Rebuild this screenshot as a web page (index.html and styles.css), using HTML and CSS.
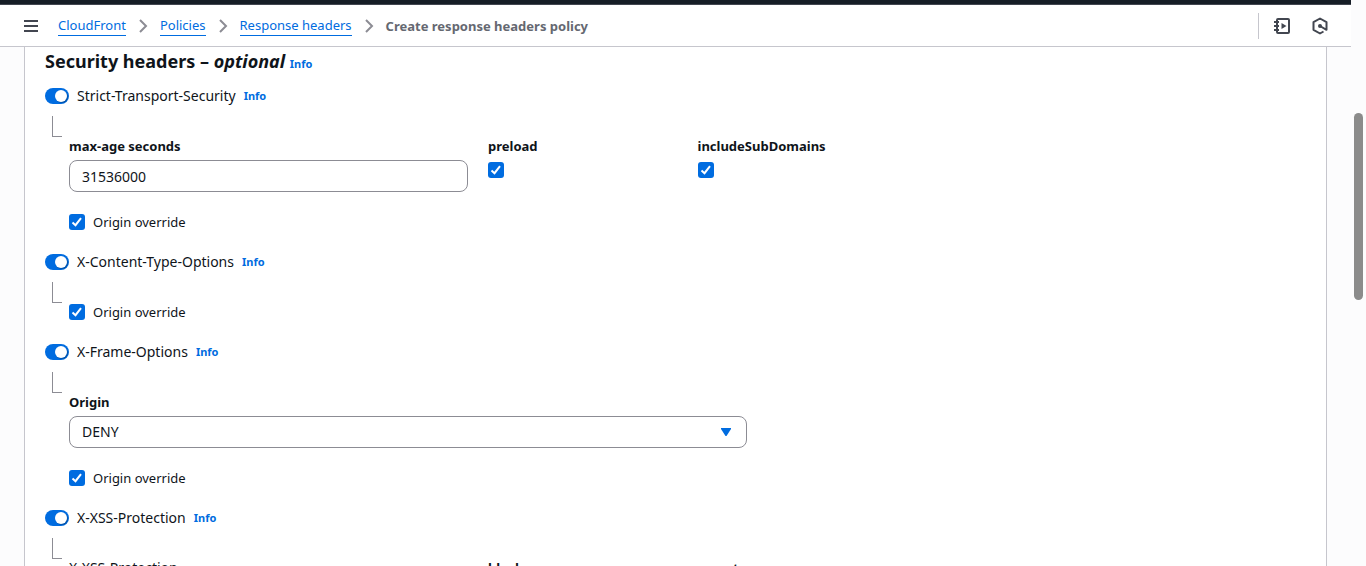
FILE: index.html
```html
<!DOCTYPE html>
<html lang="en">
<head>
<meta charset="utf-8">
<meta name="viewport" content="width=device-width, initial-scale=1">
<title>Create response headers policy</title>
<link rel="stylesheet" href="styles.css">
</head>
<body>
<div class="app">
  <div class="page">
    <div class="console-bar"></div>
    <header class="toolbar">
      <button class="icon-button" type="button" aria-label="Open navigation">
        <svg width="16" height="16" viewBox="0 0 16 16" fill="none" stroke="currentColor" stroke-width="2"><path d="M1 3h14M1 8h14M1 13h14"/></svg>
      </button>
      <nav class="breadcrumbs" aria-label="Breadcrumbs">
        <a class="crumb" href="#">CloudFront</a>
        <svg class="chevron" width="16" height="16" viewBox="0 0 16 16"><path d="M5 2l6 6-6 6"/></svg>
        <a class="crumb" href="#">Policies</a>
        <svg class="chevron" width="16" height="16" viewBox="0 0 16 16"><path d="M5 2l6 6-6 6"/></svg>
        <a class="crumb" href="#">Response headers</a>
        <svg class="chevron" width="16" height="16" viewBox="0 0 16 16"><path d="M5 2l6 6-6 6"/></svg>
        <span class="crumb-current">Create response headers policy</span>
      </nav>
      <div class="tools">
        <button class="icon-button" type="button" aria-label="Tutorials">
          <svg width="18" height="18" viewBox="0 0 18 18" fill="none" stroke="currentColor" stroke-width="2"><rect x="4" y="2" width="12" height="14" rx="1"/><path d="M1 5h5M1 9h5M1 13h5"/><path d="M8.500 6v6l5-3z" fill="currentColor" stroke="none"/></svg>
        </button>
        <button class="icon-button" type="button" aria-label="Diagnostics">
          <svg width="18" height="18" viewBox="0 0 18 18" fill="none" stroke="currentColor" stroke-width="2" stroke-linejoin="round"><path d="M12.500 14.500L9 16.500l-6.500-3.700V5.200L9 1.500l6.500 3.700v7.600L9 9"/><circle cx="9" cy="9" r="2" fill="currentColor" stroke="none"/></svg>
        </button>
      </div>
    </header>
    <main class="content">
      <form class="panel">
        <h2 class="title">Security headers – <em>optional</em> <a class="info" href="#">Info</a></h2>

        <section class="group">
          <div class="toggle-row"><input class="switch" type="checkbox" role="switch" id="sts" checked><label class="toggle-label" for="sts">Strict-Transport-Security</label><a class="info" href="#">Info</a></div>
          <div class="nested">
            <div class="fields">
              <div class="field wide"><label class="label" for="age">max-age seconds</label><input class="text" id="age" type="text" value="31536000"></div>
              <div class="field"><label class="label" for="preload">preload</label><input class="check" id="preload" type="checkbox" checked></div>
              <div class="field"><label class="label" for="subs">includeSubDomains</label><input class="check" id="subs" type="checkbox" checked></div>
            </div>
            <div class="check-row"><input class="check" id="o1" type="checkbox" checked><label for="o1">Origin override</label></div>
          </div>
        </section>

        <section class="group">
          <div class="toggle-row"><input class="switch" type="checkbox" role="switch" id="cto" checked><label class="toggle-label" for="cto">X-Content-Type-Options</label><a class="info" href="#">Info</a></div>
          <div class="nested">
            <div class="check-row"><input class="check" id="o2" type="checkbox" checked><label for="o2">Origin override</label></div>
          </div>
        </section>

        <section class="group">
          <div class="toggle-row"><input class="switch" type="checkbox" role="switch" id="xfo" checked><label class="toggle-label" for="xfo">X-Frame-Options</label><a class="info" href="#">Info</a></div>
          <div class="nested">
            <div class="field"><label class="label" for="origin">Origin</label><select class="select" id="origin"><option>DENY</option><option>SAMEORIGIN</option></select></div>
            <div class="check-row"><input class="check" id="o3" type="checkbox" checked><label for="o3">Origin override</label></div>
          </div>
        </section>

        <section class="group">
          <div class="toggle-row"><input class="switch" type="checkbox" role="switch" id="xss" checked><label class="toggle-label" for="xss">X-XSS-Protection</label><a class="info" href="#">Info</a></div>
          <div class="nested">
            <div class="fields">
              <div class="field wide"><span class="toggle-label">X-XSS-Protection</span></div>
              <div class="field"><label class="label" for="block">block</label><input class="check" id="block" type="checkbox"></div>
              <div class="field"><label class="label" for="report">report</label><input class="text" id="report" type="text"></div>
            </div>
          </div>
        </section>
      </form>
    </main>
  </div>
  <div class="scrollbar"><div class="thumb"></div></div>
</div>
</body>
</html>
```
FILE: styles.css
```css
*, *::before { box-sizing: border-box; }

body {
  margin: 0;
  background: #fcfcfd;
  color: #0f141a;
  font: 13px/20px "Noto Sans", "Open Sans", sans-serif;
}

.app { display: flex; height: 100vh; overflow: hidden; }
.page { flex: 1; min-width: 0; display: flex; flex-direction: column; }

.console-bar { flex: none; height: 5px; background: #161d26; border-bottom: 1px solid #424650; }

.toolbar {
  flex: none;
  display: flex;
  align-items: center;
  height: 42px;
  padding: 0 22px 0 23px;
  background: #fff;
  border-bottom: 1px solid #c6c6cd;
}

.icon-button {
  display: flex;
  padding: 0;
  border: 0;
  background: none;
  color: #424650;
}

.breadcrumbs { display: flex; align-items: center; flex: 1; gap: 9px; margin-left: 19px; }
.crumb { color: #006ce0; line-height: 20px; text-decoration: none; border-bottom: 1px solid #006ce0; }
.crumb-current { color: #656871; font-weight: 700; }
.chevron { flex: none; fill: none; stroke: #8c8c94; stroke-width: 2; }

.tools { display: flex; align-items: center; gap: 20px; height: 26px; padding-left: 14px; border-left: 1px solid #c6c6cd; }

.content { flex: 1; min-height: 0; overflow: hidden; padding: 0 24px; }

.panel {
  display: flex;
  flex-direction: column;
  gap: 20px;
  padding: 2px 20px 20px;
  background: #fff;
  border: solid #c6c6cd;
  border-width: 0 1px;
}

.title { margin: 0 0 -10px; font-size: 18px; line-height: 24px; font-weight: 700; }
.info { color: #006ce0; font-size: 11px; font-weight: 700; text-decoration: none; }

.toggle-row, .check-row { display: flex; align-items: center; gap: 8px; }
.toggle-label { font-size: 14px; }

.nested {
  position: relative;
  display: flex;
  flex-direction: column;
  gap: 20px;
  margin-top: 30px;
  padding-left: 24px;
}

.nested::before {
  content: "";
  position: absolute;
  left: 7px;
  top: -20px;
  width: 10px;
  height: 21px;
  border: solid #8c8c94;
  border-width: 0 0 1px 1px;
}

.fields { display: grid; grid-template-columns: repeat(12, minmax(0, 1fr)); column-gap: 20px; }
.field { display: flex; flex-direction: column; align-items: flex-start; grid-column: span 2; }
.wide { grid-column: span 4; }
.label { font-weight: 700; margin-bottom: 4px; }
.fields .check { margin-top: 2px; }

.text, .select {
  width: 100%;
  height: 32px;
  padding: 0 12px;
  border: 1px solid #8c8c94;
  border-radius: 8px;
  background: #fff;
  color: inherit;
  font: inherit;
  font-size: 14px;
}

.select {
  appearance: none;
  max-width: 678px;
  background: #fff url("data:image/svg+xml,%3Csvg xmlns='http://www.w3.org/2000/svg' width='10' height='8'%3E%3Cpath d='M0 0h10v1L5.500 8h-1L0 1z' fill='%23006ce0'/%3E%3C/svg%3E") no-repeat right 15px center;
}

.check {
  appearance: none;
  flex: none;
  width: 16px;
  height: 16px;
  margin: 0;
  border: 1px solid #8c8c94;
  border-radius: 3px;
}

.check:checked {
  border: 0;
  background: #006ce0 url("data:image/svg+xml,%3Csvg xmlns='http://www.w3.org/2000/svg' width='16' height='16'%3E%3Cpath d='M3.500 8.500l3 2.700 5.500-7' fill='none' stroke='white' stroke-width='2'/%3E%3C/svg%3E");
}

.switch {
  appearance: none;
  flex: none;
  display: flex;
  width: 24px;
  height: 16px;
  margin: 0;
  padding: 2px;
  border-radius: 8px;
  background: #8c8c94;
}

.switch::before { content: ""; width: 12px; height: 12px; border-radius: 50%; background: #fff; box-shadow: 1px 1px 1px #00000040; }
.switch:checked { justify-content: flex-end; background: #006ce0; }

.scrollbar { flex: none; width: 15px; padding: 113px 3px 0; background: #fcfcfd; }
.thumb { height: 187px; border-radius: 5px; background: #8b8b8b; }
```
